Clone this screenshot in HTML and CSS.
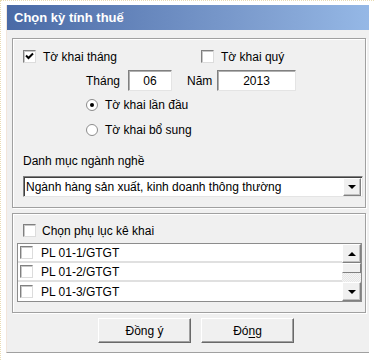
FILE: index.html
```html
<!DOCTYPE html>
<html lang="vi">

<head>
    <meta charset="UTF-8">
    <meta name="viewport" content="width=device-width, initial-scale=1.0">
    <title>Chọn kỳ tính thuế</title>
    <link rel="stylesheet" href="styles.css">
</head>

<body>
    <div class="page">
        <div class="dialog">
            <!-- Title bar -->
            <div class="titlebar">Chọn kỳ tính thuế</div>

            <div class="content">
                <!-- Period group -->
                <div class="group period">
                    <div class="row first-row">
                        <label class="check monthly">
                            <span class="box">
                                <svg width="9" height="9" viewBox="0 0 9 9">
                                    <path d="M1 3.5 L3.5 6 L8 1.5" fill="none" stroke="#000" stroke-width="2"/>
                                </svg>
                            </span>
                            Tờ khai tháng
                        </label>
                        <label class="check quarterly">
                            <span class="box"></span>
                            Tờ khai quý
                        </label>
                    </div>

                    <div class="row date-row">
                        <span class="lbl month-lbl">Tháng</span>
                        <span class="field month">06</span>
                        <span class="lbl year-lbl">Năm</span>
                        <span class="field year">2013</span>
                    </div>

                    <label class="radio first">
                        <span class="dot on"></span>
                        Tờ khai lần đầu
                    </label>
                    <label class="radio">
                        <span class="dot"></span>
                        Tờ khai bổ sung
                    </label>

                    <div class="caption">Danh mục ngành nghề</div>
                    <div class="combo">
                        <span class="combo-text">Ngành hàng sản xuất, kinh doanh thông thường</span>
                        <span class="combo-btn"><span class="arrow down"></span></span>
                    </div>
                </div>

                <!-- Appendix group -->
                <div class="group appendix">
                    <label class="check">
                        <span class="box"></span>
                        Chọn phụ lục kê khai
                    </label>

                    <div class="list">
                        <div class="items">
                            <div class="item"><span class="box"></span>PL 01-1/GTGT</div>
                            <div class="item"><span class="box"></span>PL 01-2/GTGT</div>
                            <div class="item"><span class="box"></span>PL 01-3/GTGT</div>
                        </div>
                        <div class="scrollbar">
                            <span class="sb-btn"><span class="arrow up"></span></span>
                            <span class="sb-thumb"></span>
                            <span class="sb-track"></span>
                            <span class="sb-btn"><span class="arrow down"></span></span>
                        </div>
                    </div>
                </div>
            </div>

            <!-- Buttons -->
            <div class="actions">
                <div class="button">Đồng ý</div>
                <div class="button">Đó<u>n</u>g</div>
            </div>
        </div>
    </div>
</body>

</html>
```

FILE: styles.css
```css
/* General styles */
body {
    margin: 0;
    font-family: "Liberation Sans", Arial, sans-serif;
    font-size: 12px;
    color: #000;
    background: #fff;
}

.page {
    height: 360px;
    box-sizing: border-box;
    padding: 4px 5px 0 5px;
    border-top: 1px dotted #eadcb4;
    border-left: 1px dotted #eadcb4;
}

.dialog {
    width: 363px;
    background: #f0f0f0;
    border-left: 1px solid #f3e6dc;
    border-bottom: 1px solid #a0a0a0;
    box-sizing: border-box;
}

/* Title bar */
.titlebar {
    height: 25px;
    line-height: 25px;
    padding-left: 7px;
    font-size: 13px;
    font-weight: bold;
    color: #fff;
    background: linear-gradient(to right, #4a6aa6, #7f9fd0 70%, #95b8e6);
}

.content {
    padding: 8px 3px 0 5px;
}

/* Group boxes */
.group {
    border: 1px solid #a0a0a0;
    box-shadow: inset 1px 1px 0 #fff, 1px 1px 0 #fff;
    box-sizing: border-box;
}

.period {
    height: 170px;
    padding: 11px 0 0 10px;
}

.appendix {
    height: 100px;
    margin-top: 5px;
    padding: 10px 0 0 4px;
}

.row {
    display: flex;
    align-items: center;
}

/* Checkboxes */
.check {
    display: flex;
    align-items: center;
    height: 13px;
    white-space: nowrap;
}

.box {
    width: 13px;
    height: 13px;
    box-sizing: border-box;
    background: #fff;
    border: 1px solid;
    border-color: #808080 #dcdcdc #dcdcdc #808080;
    box-shadow: inset 1px 1px 0 #c8c8c8;
    display: flex;
    align-items: center;
    justify-content: center;
    flex-shrink: 0;
}

.check .box {
    margin-right: 7px;
}

.appendix .check .box {
    margin-left: 6px;
    margin-right: 6px;
}

.monthly {
    width: 178px;
    flex-shrink: 0;
}

/* Month / year */
.date-row {
    margin-top: 7px;
    height: 21px;
}

.month-lbl {
    margin-left: 63px;
    width: 42px;
}

.year-lbl {
    margin-left: 15px;
    width: 30px;
}

.field {
    height: 21px;
    box-sizing: border-box;
    background: #fff;
    border: 1px solid;
    border-color: #808080 #e4e4e4 #e4e4e4 #808080;
    box-shadow: inset 1px 1px 0 #b0b0b0;
    display: flex;
    align-items: center;
    justify-content: center;
}

.month {
    width: 44px;
}

.year {
    width: 79px;
}

/* Radios */
.radio {
    display: flex;
    align-items: center;
    height: 13px;
    margin: 12px 0 0 63px;
    white-space: nowrap;
}

.radio.first {
    margin-top: 7px;
}

.dot {
    width: 12px;
    height: 12px;
    box-sizing: border-box;
    border-radius: 50%;
    border: 1px solid #8c8c8c;
    background: #fff;
    margin-right: 7px;
    display: flex;
    align-items: center;
    justify-content: center;
}

.dot.on::after {
    content: "";
    width: 4px;
    height: 4px;
    border-radius: 50%;
    background: #000;
}

/* Combo box */
.caption {
    margin-top: 18px;
    height: 14px;
    line-height: 14px;
}

.combo {
    display: flex;
    align-items: center;
    margin-top: 8px;
    width: 340px;
    height: 21px;
    box-sizing: border-box;
    background: #fff;
    border: 1px solid;
    border-color: #808080 #e4e4e4 #e4e4e4 #808080;
    box-shadow: inset 1px 1px 0 #404040;
    padding: 0 1px 0 2px;
}

.combo-text {
    flex: 1;
    padding-top: 1px;
}

.combo-btn,
.sb-btn {
    width: 18px;
    height: 18px;
    box-sizing: border-box;
    background: #f0f0f0;
    border: 1px solid;
    border-color: #fff #808080 #808080 #fff;
    box-shadow: inset -1px -1px 0 #c0c0c0;
    display: flex;
    align-items: center;
    justify-content: center;
}

.arrow {
    width: 0;
    height: 0;
    border-left: 4px solid transparent;
    border-right: 4px solid transparent;
}

.arrow.down {
    border-top: 4px solid #000;
}

.arrow.up {
    border-bottom: 4px solid #000;
}

/* List */
.list {
    display: flex;
    margin-top: 6px;
    width: 345px;
    height: 59px;
    box-sizing: border-box;
    background: #fff;
    border: 1px solid #8c8c8c;
}

.items {
    flex: 1;
}

.item {
    display: flex;
    align-items: center;
    height: 19px;
    box-sizing: border-box;
    border-bottom: 2px solid #e0e0e0;
    padding-left: 2px;
}

.item:last-child {
    border-bottom: none;
}

.item .box {
    margin-right: 8px;
}

.scrollbar {
    width: 19px;
    display: flex;
    flex-direction: column;
}

.sb-btn {
    width: 19px;
    height: 19px;
}

.sb-thumb {
    height: 10px;
    box-sizing: border-box;
    background: #f0f0f0;
    border: 1px solid;
    border-color: #fff #808080 #808080 #fff;
}

.sb-track {
    flex: 1;
    background: repeating-conic-gradient(#f4f4f4 0 25%, #e6e6e6 0 50%) 0 0 / 2px 2px;
}

/* Buttons */
.actions {
    display: flex;
    gap: 10px;
    padding: 5px 0 9px 91px;
}

.button {
    width: 93px;
    height: 25px;
    box-sizing: border-box;
    border: 1px solid;
    border-color: #fff #696969 #696969 #fff;
    box-shadow: inset -1px -1px 0 #a0a0a0;
    background: #f0f0f0;
    display: flex;
    align-items: center;
    justify-content: center;
}

.button u {
    text-decoration-thickness: 1px;
    text-underline-offset: 2px;
}
```
